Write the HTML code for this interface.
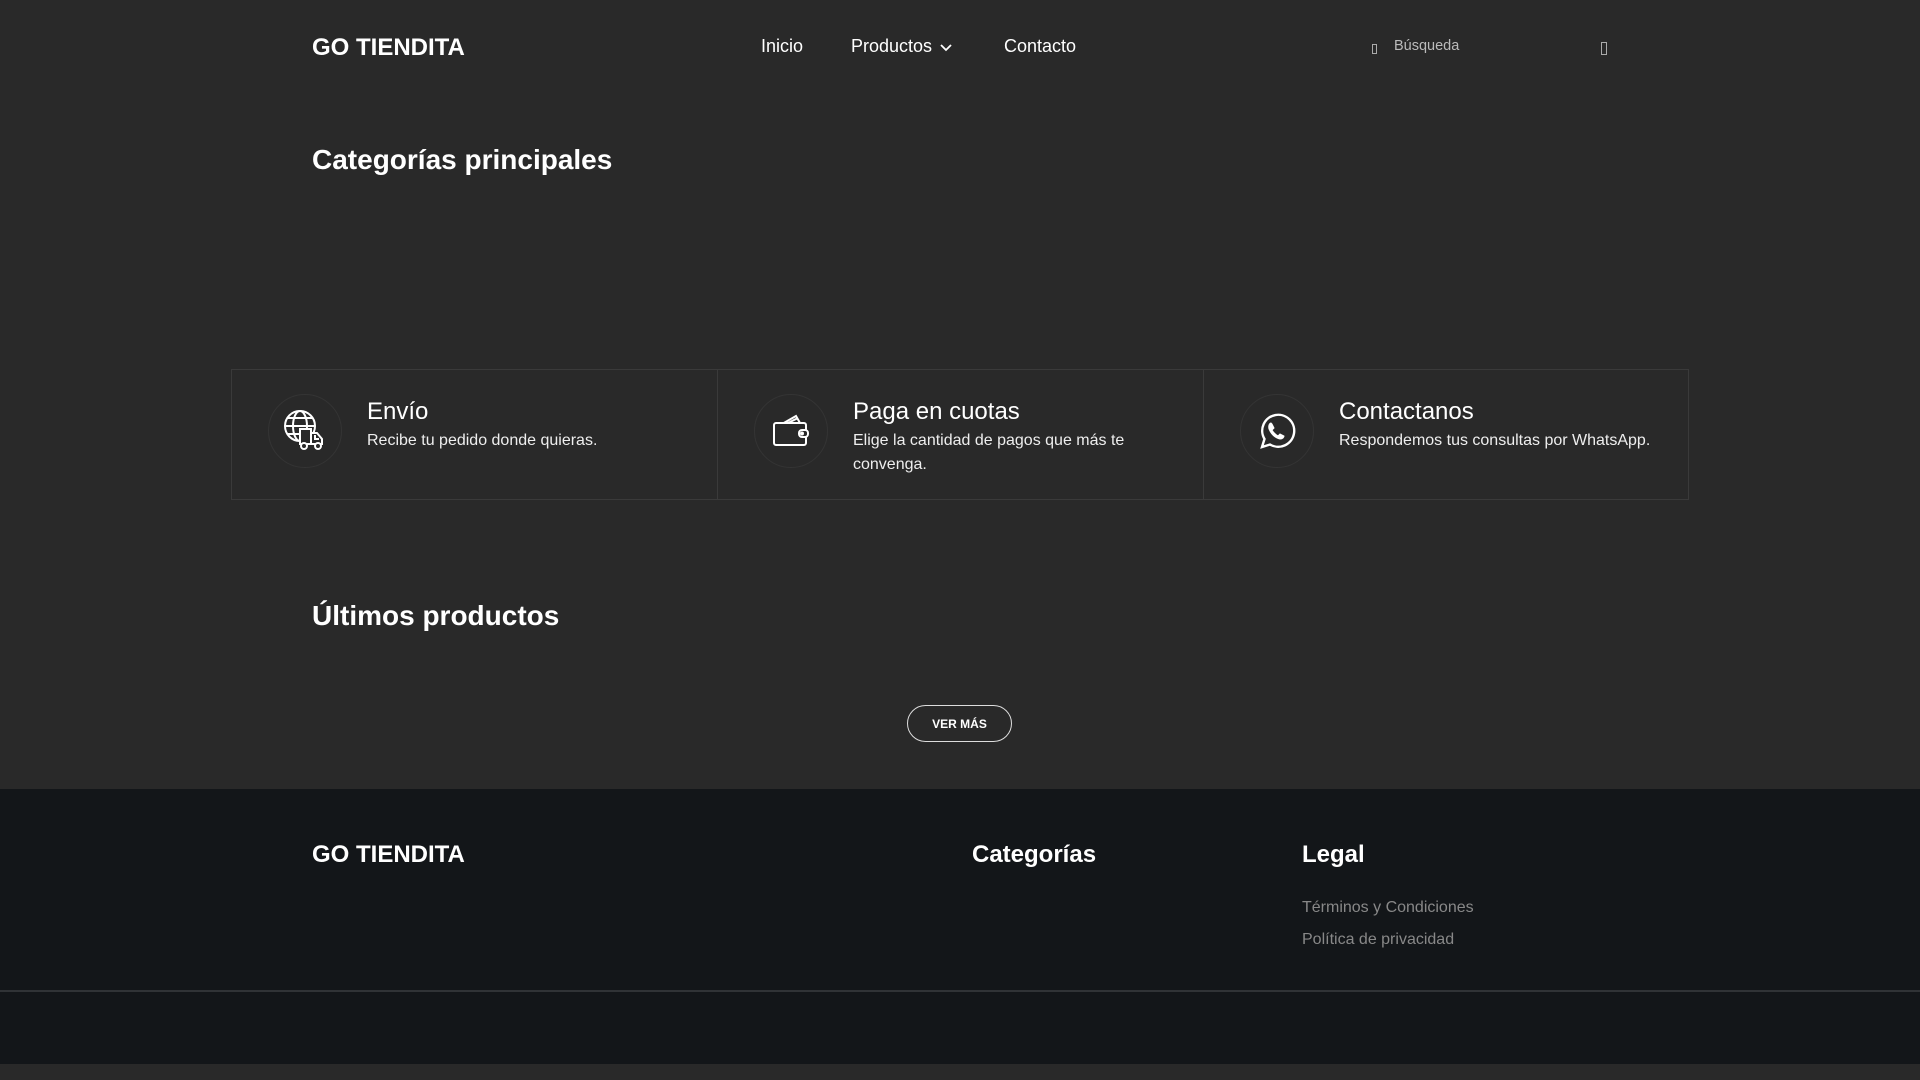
<!DOCTYPE html>
<html><head><meta charset="utf-8"><style>
*{margin:0;padding:0;box-sizing:border-box}
body{width:1920px;height:1080px;background:#292929;font-family:"Liberation Sans",Arial,sans-serif;color:#fff;position:relative;overflow:hidden}
.a{position:absolute;white-space:nowrap}
.logo{font-size:24px;font-weight:bold}
.nav{font-size:18px;top:36px}
.h2{font-size:28px;font-weight:bold}
.box{position:absolute;top:369px;height:131px;border:1px solid #3a3a3a}
.circ{position:absolute;width:74px;height:74px;border-radius:50%;border:1px solid #343434;top:24px;left:36px;display:flex;align-items:center;justify-content:center}
.t{position:absolute;left:135px;top:28px;font-size:24px}
.d{position:absolute;left:135px;top:59px;font-size:16px;line-height:24px;color:#eee;white-space:normal}
.tofu{position:absolute;border:1px solid #aaa}
</style></head><body>
<div class="a logo" style="left:312px;top:34px">GO TIENDITA</div>
<div class="a nav" style="left:761px">Inicio</div>
<div class="a nav" style="left:851px">Productos <svg width="14" height="10" viewBox="0 0 14 10" style="margin-left:2px"><path d="M2 3l5 5 5-5" stroke="#fff" stroke-width="1.8" fill="none"/></svg></div>
<div class="a nav" style="left:1004px">Contacto</div>
<div class="tofu" style="left:1372px;top:44px;width:5px;height:10px"></div>
<div class="a" style="left:1394px;top:38px;font-size:14.5px;color:#bbb">Búsqueda</div>
<div class="tofu" style="left:1601px;top:42px;width:6px;height:13px"></div>

<div class="a h2" style="left:312px;top:144px">Categorías principales</div>

<div class="box" style="left:231px;width:487px">
 <div class="circ"><svg width="46" height="46" viewBox="0 0 46 46" fill="none" stroke="#fff" stroke-width="2"><circle cx="18" cy="18" r="15"/><ellipse cx="18" cy="18" rx="7" ry="15"/><path d="M3 18h30M5 10h26M5 26h14"/><rect x="18" y="21" width="11" height="15" fill="#292929"/><path d="M29 25h6l5 6v5h-11z" fill="#292929"/><path d="M33 27v4h4"/><circle cx="22" cy="38" r="3" fill="#292929"/><circle cx="36" cy="38" r="3" fill="#292929"/></svg></div>
 <div class="t">Envío</div><div class="d">Recibe tu pedido donde quieras.</div>
</div>
<div class="box" style="left:717px;width:487px">
 <div class="circ"><svg width="42" height="42" viewBox="0 0 42 42" fill="none" stroke="#fff" stroke-width="2"><path d="M12 14l14-8 4 7M16 14l12-6"/><rect x="4" y="13" width="32" height="22" rx="2" fill="#292929"/><rect x="29" y="20" width="9" height="7" rx="3" fill="#292929"/><circle cx="32" cy="23.5" r="1"/></svg></div>
 <div class="t">Paga en cuotas</div><div class="d" style="width:300px">Elige la cantidad de pagos que más te convenga.</div>
</div>
<div class="box" style="left:1203px;width:486px">
 <div class="circ"><svg width="40" height="40" viewBox="0 0 40 40" fill="none" stroke="#fff" stroke-width="2.4"><path d="M5 36l2.5-8A16 16 0 1 1 13 33.5z"/><path d="M14 12c-1 0-3 2-2 6 2 5 6 9 11 10 3 0 4-2 4-3l-4-2-2 2c-2-1-5-4-6-6l2-2-2-4z" fill="#fff" stroke-width="1"/></svg></div>
 <div class="t">Contactanos</div><div class="d">Respondemos tus consultas por WhatsApp.</div>
</div>

<div class="a h2" style="left:312px;top:600px">Últimos productos</div>
<div class="a" style="left:907px;top:705px;width:105px;height:37px;border:1px solid #ddd;border-radius:19px;font-size:12px;font-weight:bold;display:flex;align-items:center;justify-content:center">VER MÁS</div>

<div class="a" style="left:0;top:789px;width:1920px;height:275px;background:#131619"></div>
<div class="a" style="left:0;top:990px;width:1920px;height:2px;background:#303336"></div>
<div class="a logo" style="left:312px;top:841px">GO TIENDITA</div>
<div class="a logo" style="left:972px;top:841px">Categorías</div>
<div class="a logo" style="left:1302px;top:841px">Legal</div>
<div class="a" style="left:1302px;top:899px;font-size:16px;color:#888">Términos y Condiciones</div>
<div class="a" style="left:1302px;top:931px;font-size:16px;color:#888">Política de privacidad</div>
</body></html>
